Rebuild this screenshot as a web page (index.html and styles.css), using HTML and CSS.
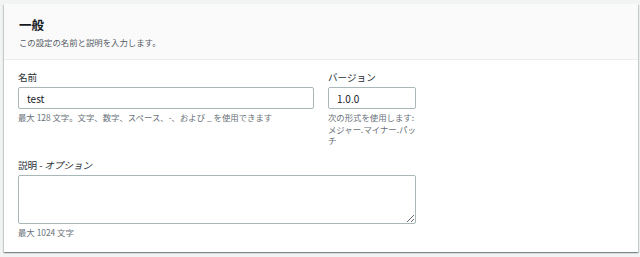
FILE: index.html
```html
<!DOCTYPE html>
<html lang="ja">
<head>
  <meta charset="UTF-8">
  <title>一般</title>
  <link rel="stylesheet" href="styles.css">
</head>
<body>
  <div class="panel">
    <div class="panel-header">
      <div class="panel-title">一般</div>
      <div class="panel-desc">この設定の名前と説明を入力します。</div>
    </div>
    <div class="panel-body">
      <div class="row">
        <div class="field field-name">
          <label class="label">名前</label>
          <input class="input" type="text" value="test">
          <div class="hint">最大 128 文字。文字、数字、スペース、-、および _ を使用できます</div>
        </div>
        <div class="field field-version">
          <label class="label">バージョン</label>
          <input class="input" type="text" value="1.0.0">
          <div class="hint">次の形式を使用します: メジャー.マイナー.パッチ</div>
        </div>
      </div>
      <div class="field field-desc">
        <label class="label">説明 - <span class="optional">オプション</span></label>
        <textarea class="textarea"></textarea>
        <div class="hint">最大 1024 文字</div>
      </div>
    </div>
  </div>
</body>
</html>
```

FILE: styles.css
```css
body {
  margin: 0;
  padding: 4px 2px 4px 4px;
  background-color: #f2f3f3;
  color: #16191f;
  font-family: "Noto Sans CJK JP", "Noto Sans", sans-serif;
}
.panel {
  background-color: #fff;
  box-shadow: 0 1px 1px 0 rgba(0,28,36,0.3), 1px 1px 1px 0 rgba(0,28,36,0.15), -1px 1px 1px 0 rgba(0,28,36,0.15);
}
.panel-header {
  background-color: #fafafa;
  border-bottom: 1px solid #eaeded;
  padding: 13px 15px 11px;
}
.panel-title {
  font-size: 12.5px;
  font-weight: bold;
  line-height: 16px;
}
.panel-desc {
  margin-top: 3px;
  font-size: 8.4px;
  line-height: 12px;
  color: #545b64;
}
.panel-body {
  padding: 11px 14px 14px;
}
.row {
  display: flex;
  gap: 14px;
  margin-bottom: 12px;
}
.field {
  display: flex;
  flex-direction: column;
}
.field-name {
  width: 296px;
}
.field-version {
  width: 88px;
}
.field-desc {
  width: 398px;
}
.label {
  font-size: 9.6px;
  font-weight: normal;
  line-height: 13px;
  margin-bottom: 3px;
  color: #2a2f36;
}
.optional {
  display: inline-block;
  transform: skewX(-14deg);
}
.input {
  box-sizing: border-box;
  height: 22px;
  width: 100%;
  margin: 0;
  padding: 0 8px;
  border: 1px solid #aab7b8;
  border-radius: 2px;
  font-family: inherit;
  font-size: 10px;
  color: #16191f;
}
.textarea {
  box-sizing: border-box;
  display: block;
  height: 49px;
  width: 100%;
  margin: 0;
  border: 1px solid #aab7b8;
  border-radius: 2px;
  font-family: inherit;
}
.hint {
  margin-top: 3px;
  font-size: 8.4px;
  line-height: 11.5px;
  color: #687078;
}
```
